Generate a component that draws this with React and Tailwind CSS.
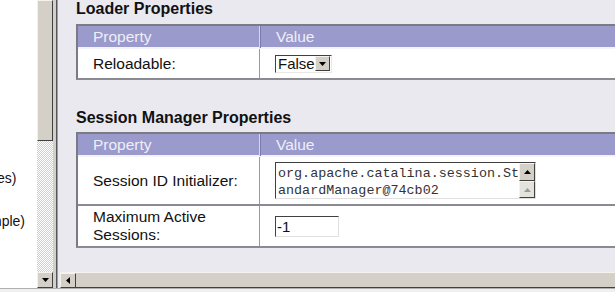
import React from "react";

const font = "font-['Liberation_Sans','Arial',sans-serif]";

function DownTri() {
  return (
    <svg width="7" height="4" viewBox="0 0 7 4"><path d="M0 0h7L3.5 4z" fill="#000" /></svg>
  );
}
function UpTri({ color = "#000" }) {
  return (
    <svg width="7" height="4" viewBox="0 0 7 4"><path d="M0 4h7L3.5 0z" fill={color} /></svg>
  );
}
function LeftTri() {
  return (
    <svg width="4" height="7" viewBox="0 0 4 7"><path d="M4 0v7L0 3.5z" fill="#000" /></svg>
  );
}

function Btn({ children, className = "" }) {
  return (
    <div
      className={`flex items-center justify-center bg-[#d4d0c8] border border-t-[#f4f3ef] border-l-[#f4f3ef] border-r-[#404040] border-b-[#404040] ${className}`}
    >
      {children}
    </div>
  );
}

function PropTable({ rows }) {
  return (
    <div className="w-[620px] border-[2px] border-t-[#7b7b85] border-l-[#7b7b85] border-b-[#8a8a92] border-r-[#8a8a92] bg-white">
      <div className="grid grid-cols-[182px_1fr] bg-[#9a9acc] h-[23px] border-b-[2px] border-b-[#f4f4f8]">
        <div className="pl-[15px] text-[15.5px] leading-[22px] text-[#eeeef6] border-r border-r-[#d8d8ea]">Property</div>
        <div className="pl-[15px] text-[15.5px] leading-[22px] text-[#eeeef6] border-l border-l-[#7a7aa8]">Value</div>
      </div>
      {rows.map((r, i) => (
        <div
          key={i}
          className={`grid grid-cols-[182px_1fr] ${i > 0 ? "border-t-[2px] border-t-[#8a8a92]" : ""}`}
          style={{ height: r.h }}
        >
          <div className="pl-[15px] flex items-center text-[15.5px] leading-[18px] text-[#111] border-r border-r-[#9a9a9a]">
            {r.label}
          </div>
          <div className="pl-[15px] flex items-center">{r.value}</div>
        </div>
      ))}
    </div>
  );
}

export default function App() {
  const reloadSelect = (
    <div className="flex items-center w-[57px] h-[18px] bg-white border border-t-[#404040] border-l-[#404040] border-r-[#e8e8e8] border-b-[#e8e8e8]">
      <span className="pl-[2px] text-[15px] leading-[16px] text-[#111] flex-1">False</span>
      <Btn className="w-[15px] h-[15px] mr-[1px]"><DownTri /></Btn>
    </div>
  );
  const sessionArea = (
    <div className="flex w-[261px] h-[37px] bg-white border border-t-[#404040] border-l-[#404040] border-r-[#e0e0e0] border-b-[#e0e0e0]">
      <div className="flex-1 pl-[2px] pt-[2px] font-['Liberation_Mono','Courier_New',monospace] text-[13.4px] leading-[17px] text-[#333] whitespace-pre overflow-hidden">
        {"org.apache.catalina.session.St\nandardManager@74cb02"}
      </div>
      <div className="w-[16px] flex flex-col">
        <Btn className="h-[18px]"><UpTri /></Btn>
        <Btn className="h-[17px] bg-[#e4e2dc]"><UpTri color="#9a9a9a" /></Btn>
      </div>
    </div>
  );
  const maxInput = (
    <div className="w-[64px] h-[21px] bg-white border border-t-[#404040] border-l-[#404040] border-r-[#e0e0e0] border-b-[#e0e0e0] text-[15px] leading-[19px] text-[#111] pl-[1px]">
      -1
    </div>
  );

  return (
    <div className={`w-[615px] h-[292px] overflow-hidden flex flex-col bg-white ${font}`}>
      <div className="flex h-[288px]">
        {/* left frame */}
        <div className="w-[37px] bg-white relative overflow-hidden text-[14px] text-[#111]">
          <div className="absolute left-[-3px] top-[168px] whitespace-nowrap">es)</div>
          <div className="absolute left-[-10px] top-[211px] whitespace-nowrap">mple)</div>
        </div>
        <div className="w-[16px] flex flex-col">
          <div className="h-[141px] bg-[#d4d0c8] border border-t-[#f4f3ef] border-l-[#f4f3ef] border-r-[#404040] border-b-[#404040]" />
          <div className="flex-1 bg-[repeating-conic-gradient(#d4d0c8_0_25%,#ffffff_0_50%)] bg-[length:2px_2px]" />
          <Btn className="h-[16px]"><DownTri /></Btn>
        </div>
        {/* frame divider */}
        <div className="w-[7px] flex">
          <div className="w-[3px] bg-[#d4d0c8]" />
          <div className="w-[1px] bg-[#55555c]" />
          <div className="w-[1px] bg-[#a0a0a0]" />
          <div className="w-[2px] bg-[#e9e9ef]" />
        </div>
        {/* right frame */}
        <div className="flex-1 min-w-0 flex flex-col overflow-hidden">
          <div className="flex-1 overflow-hidden bg-[#e9e9ef] pl-[16px]">
            <div className="h-[18px] text-[16px] leading-[18px] font-bold text-[#111] whitespace-nowrap">Loader Properties</div>
            <div className="mt-[6px]">
              <PropTable rows={[{ label: "Reloadable:", value: reloadSelect, h: 29 }]} />
            </div>
            <div className="mt-[28px] h-[20px] text-[16px] leading-[20px] font-bold text-[#111] whitespace-nowrap">Session Manager Properties</div>
            <div className="mt-[4px]">
              <PropTable
                rows={[
                  { label: "Session ID Initializer:", value: sessionArea, h: 47 },
                  { label: <span>Maximum Active<br />Sessions:</span>, value: maxInput, h: 42 },
                ]}
              />
            </div>
          </div>
          <div className="h-[16px] flex bg-[#d4d0c8] border-t border-t-[#f4f3ef]">
            <Btn className="w-[16px] h-[15px]"><LeftTri /></Btn>
            <div className="flex-1 border-b border-b-[#404040]" />
          </div>
        </div>
      </div>
      <div className="h-[4px] bg-[#f0f0f0] border-t border-t-[#b0b0b0]" />
    </div>
  );
}
